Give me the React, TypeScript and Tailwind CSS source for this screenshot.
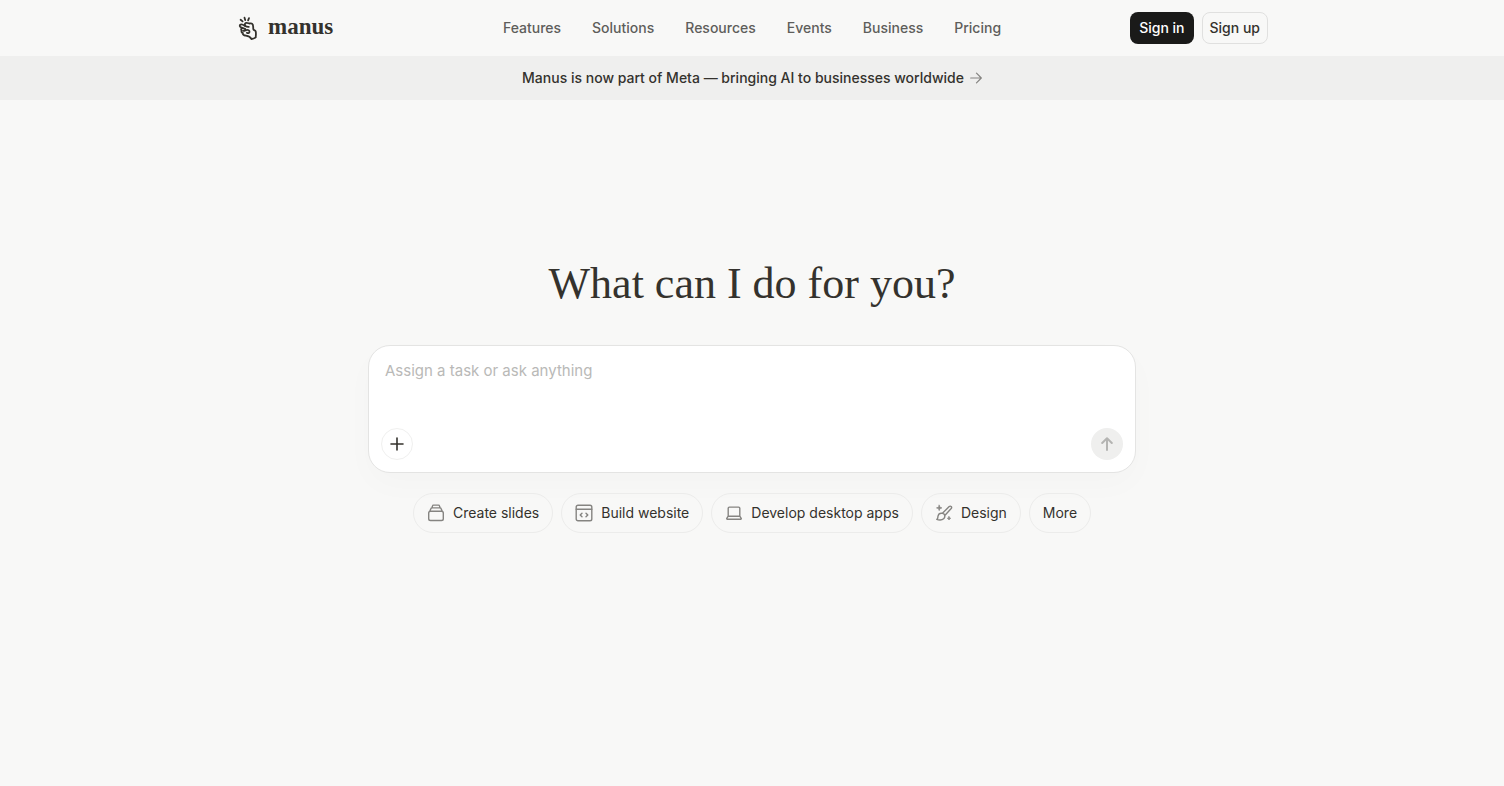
import React from "react";

const navLinks = ["Features", "Solutions", "Resources", "Events", "Business", "Pricing"];

function LogoMark() {
  return (
    <svg width="26" height="30" viewBox="0 0 26 30" fill="none" stroke="#34322d" strokeWidth="1.8" strokeLinecap="round" strokeLinejoin="round" aria-hidden="true">
      <path d="M4.600 6.800l2 1.600M8.500 4.700l.7 2.400M13 5.100l-.9 2.200" />
      <path d="M9.300 13.100C7.600 12 5.600 10.600 4.300 11.700c-1 .9-.4 2.200.8 2.700l1.500.7c-1.500.1-2 1.700-.8 2.500-.7 1.100-.1 2.200 1 2.400-.1 1.500.8 2.300 2.200 2.500 2.700.4 4.900.3 6.500 3.500 1.700-.2 3-.7 4.200-1.600.1-2.200.6-4.500-.1-6.300-.6-.5-1.600-.9-2.200-1.700-.6-1.700.5-4.400-1.300-5.700-1-.7-1.900.1-3.100-.3-1.300-.5-2.300-1-3.300-.4-1 .7-1 2-.4 3.100z" />
      <path d="M9.300 13.100c1.100.7 2.300.9 3.500.8M6.600 15.100l2.600.8M7.200 17.800c1.500.4 2.400-1 3.900-1 1.400 0 2.500.9 2.400 2.100-.1 1.300-1.600 1.500-2.600.8" />
    </svg>
  );
}

function Icon({ children }: { children: React.ReactNode }) {
  return (
    <svg width="18" height="18" viewBox="0 0 18 18" fill="none" stroke="#858481" strokeWidth="1.4" strokeLinecap="round" strokeLinejoin="round" aria-hidden="true">
      {children}
    </svg>
  );
}

const chips = [
  {
    label: "Create slides",
    icon: (
      <Icon>
        <rect x="1.700" y="7.200" width="14.600" height="9.300" rx="1.800" />
        <path d="M3 7l.8-2.200c.2-.6.6-.9 1.200-.9h8c.6 0 1 .3 1.200.9L15 7M5 3.800l.5-1.900c.1-.5.5-.8 1-.8h5c.5 0 .9.3 1 .8l.5 1.900" />
      </Icon>
    ),
  },
  {
    label: "Build website",
    icon: (
      <Icon>
        <rect x="1.200" y="1.200" width="15.600" height="15.600" rx="1.800" />
        <path d="M1.200 5.200h15.600M7 9.200L5.200 11 7 12.800M11 9.200l1.800 1.800-1.800 1.800" />
      </Icon>
    ),
  },
  {
    label: "Develop desktop apps",
    icon: (
      <Icon>
        <path d="M3.200 12.200V4.300c0-.7.5-1.200 1.200-1.200h9.200c.7 0 1.200.5 1.200 1.200v7.900M3.200 12.200h11.600l1.400 2.200c.2.400 0 .8-.5.800H2.300c-.5 0-.7-.4-.5-.8z" />
      </Icon>
    ),
  },
  {
    label: "Design",
    icon: (
      <Icon>
        <path d="M7.400 9.300l6.800-6.700c.6-.6 1.500-.6 2 0 .5.500.5 1.300 0 1.900l-6.400 7M7.400 9.300c1.300.2 2.200 1 2.400 2.300.3 2.600-1.800 4.400-4.700 4.400-1 0-2.200-.1-3.300-.6 1.400-.9.900-2 1.200-3.300.4-1.800 2.200-3.200 4.400-2.800z" />
        <path d="M4.200 1.200l.7 2 2 .7-2 .7-.7 2-.7-2-2-.7 2-.7zM14 12.600l.5 1.200 1.200.5-1.200.5-.5 1.200-.5-1.200-1.200-.5 1.200-.5z" fill="#858481" strokeWidth=".7" />
      </Icon>
    ),
  },
  { label: "More", icon: null },
];

export default function App() {
  return (
    <div className="flex min-h-screen flex-col bg-[#f8f8f7] font-['Inter',sans-serif] text-[#34322d]">
      <header className="px-6">
        <div className="mx-auto grid h-14 max-w-[1032px] grid-cols-[1fr_auto_1fr] items-center">
          <a href="#" className="flex items-center gap-1.5" aria-label="manus home">
            <LogoMark />
            <span className="pb-0.5 font-['Liberation_Serif',serif] text-[23px] leading-7 font-bold">manus</span>
          </a>
          <nav className="flex items-center gap-[31px] text-sm font-medium text-[#5e5e5b]" aria-label="Main">
            {navLinks.map((label) => (
              <a key={label} href="#">{label}</a>
            ))}
          </nav>
          <div className="flex items-center justify-end gap-2 text-sm font-medium">
            <button type="button" className="h-8 rounded-lg bg-[#1a1a19] px-[9px] text-white">Sign in</button>
            <button type="button" className="h-8 rounded-lg border border-[#e0e0df] px-[7px]">Sign up</button>
          </div>
        </div>
      </header>

      <a href="#" className="flex h-11 items-center justify-center gap-1.5 bg-[#efefee] text-sm font-medium">
        Manus is now part of Meta — bringing AI to businesses worldwide
        <svg width="12" height="12" viewBox="0 0 12 12" fill="none" stroke="#858481" strokeWidth="1.200" strokeLinecap="round" strokeLinejoin="round" aria-hidden="true">
          <path d="M.7 6h10.600M6.500 1.200L11.300 6l-4.800 4.800" />
        </svg>
      </a>

      <main className="mx-auto flex w-full max-w-[816px] flex-col items-center px-6 pt-[158px]">
        <h1 className="font-['Liberation_Serif',serif] text-[44px] leading-[52px]">What can I do for you?</h1>

        <form className="mt-[35px] flex w-full flex-col rounded-[22px] border border-[#e4e4e3] bg-white p-3 shadow-[0_12px_32px_rgba(0,0,0,0.02)]" onSubmit={(e) => e.preventDefault()}>
          <textarea
            aria-label="Task"
            rows={2}
            placeholder="Assign a task or ask anything"
            className="h-[70px] w-full resize-none bg-transparent px-1 text-[15px] leading-[26px] outline-none placeholder:text-[#b9b9b7]"
          />
          <div className="flex items-center justify-between">
            <button type="button" aria-label="Add" className="flex size-8 items-center justify-center rounded-full border border-[#f0f0ef]">
              <svg width="14" height="14" viewBox="0 0 14 14" stroke="#34322d" strokeWidth="1.600" strokeLinecap="round" aria-hidden="true">
                <path d="M7 1v12M1 7h12" />
              </svg>
            </button>
            <button type="submit" aria-label="Send" className="flex size-8 items-center justify-center rounded-full bg-[#efefee]">
              <svg width="14" height="14" viewBox="0 0 14 14" fill="none" stroke="#b4b4b2" strokeWidth="2" strokeLinecap="round" strokeLinejoin="round" aria-hidden="true">
                <path d="M7 13V1.300M2.200 6L7 1.200 11.800 6" />
              </svg>
            </button>
          </div>
        </form>

        <div className="mt-5 flex flex-wrap justify-center gap-2">
          {chips.map(({ label, icon }) => (
            <button key={label} type="button" className="flex h-10 items-center gap-2 rounded-full border border-[#ececeb] px-[13px] text-sm">
              {icon}
              {label}
            </button>
          ))}
        </div>
      </main>
    </div>
  );
}
